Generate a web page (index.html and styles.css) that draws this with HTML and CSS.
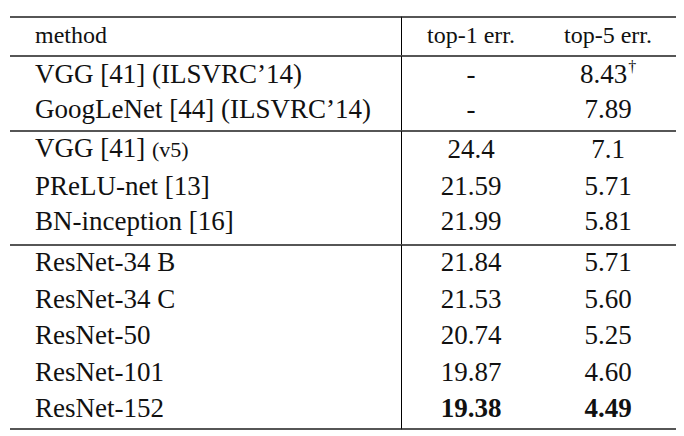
FILE: index.html
```html
<!DOCTYPE html>
<html lang="en">
<head>
    <meta charset="UTF-8">
    <meta name="viewport" content="width=device-width, initial-scale=1.0">
    <title>ImageNet validation error</title>
    <link rel="stylesheet" href="styles.css">
</head>
<body>
    <table class="results">
        <thead>
            <tr>
                <th class="method">method</th>
                <th>top-1 err.</th>
                <th>top-5 err.</th>
            </tr>
        </thead>
        <tbody class="group-ilsvrc">
            <tr>
                <td class="method">VGG [41] (ILSVRC’14)</td>
                <td>-</td>
                <td>8.43<sup class="mark">†</sup></td>
            </tr>
            <tr>
                <td class="method">GoogLeNet [44] (ILSVRC’14)</td>
                <td>-</td>
                <td>7.89</td>
            </tr>
        </tbody>
        <tbody class="group-others">
            <tr>
                <td class="method">VGG [41] <span class="note">(v5)</span></td>
                <td>24.4</td>
                <td>7.1</td>
            </tr>
            <tr>
                <td class="method">PReLU-net [13]</td>
                <td>21.59</td>
                <td>5.71</td>
            </tr>
            <tr>
                <td class="method">BN-inception [16]</td>
                <td>21.99</td>
                <td>5.81</td>
            </tr>
        </tbody>
        <tbody class="group-ours">
            <tr>
                <td class="method">ResNet-34 B</td>
                <td>21.84</td>
                <td>5.71</td>
            </tr>
            <tr>
                <td class="method">ResNet-34 C</td>
                <td>21.53</td>
                <td>5.60</td>
            </tr>
            <tr>
                <td class="method">ResNet-50</td>
                <td>20.74</td>
                <td>5.25</td>
            </tr>
            <tr>
                <td class="method">ResNet-101</td>
                <td>19.87</td>
                <td>4.60</td>
            </tr>
            <tr>
                <td class="method">ResNet-152</td>
                <td class="best">19.38</td>
                <td class="best">4.49</td>
            </tr>
        </tbody>
    </table>
</body>
</html>
```

FILE: styles.css
```css
:root {
    --rule-color: #565656;
    --text-color: #111;
}

body {
    margin: 0;
    background: #fff;
    color: var(--text-color);
    font-family: "Liberation Serif", "Times New Roman", serif;
}

.results {
    margin: 16px 0 0 10px;
    width: 666px;
    border-collapse: separate;
    border-spacing: 0;
    table-layout: fixed;
}

.results th,
.results td {
    padding: 0;
    text-align: center;
    font-weight: normal;
    white-space: nowrap;
}

/* header row */
.results th {
    font-size: 24px;
    line-height: 35px;
    padding-bottom: 2px;
    border-top: 2px solid var(--rule-color);
}
.results th.method {
    width: 366px;
}
.results th:nth-child(2) {
    width: 138px;
}

.results td {
    font-size: 27px;
    line-height: 32px;
}

.results .method {
    text-align: left;
    padding-left: 25px;
    border-right: 1px solid #000;
}

/* each group starts with a rule */
.results tbody tr:first-child td {
    border-top: 2px solid var(--rule-color);
}
.results tbody:last-child tr:last-child td {
    border-bottom: 2px solid var(--rule-color);
}

.group-ilsvrc td {
    padding-top: 1px;
    padding-bottom: 2px;
}
.group-ilsvrc tr:last-child td {
    padding-bottom: 5px;
}

.group-others td {
    padding-bottom: 3.5px;
}
.group-others tr:last-child td {
    padding-bottom: 7px;
}

.group-ours td {
    padding-bottom: 4.5px;
}
.group-ours tr:last-child td {
    padding-bottom: 4px;
}

.note {
    font-size: 22px;
}

.mark {
    font-size: 16px;
    line-height: 0;
    vertical-align: 11px;
    margin-left: 1px;
}

.results td.best {
    font-weight: bold;
}
```
